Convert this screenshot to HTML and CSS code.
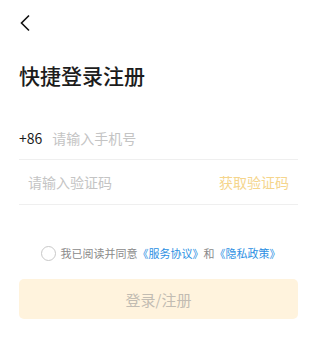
FILE: index.html
```html
<!DOCTYPE html>
<html lang="zh">
<head>
<meta charset="utf-8">
<link rel="stylesheet" href="styles.css">
</head>
<body>
<div class="page">
  <div class="nav">
    <svg class="back" width="12" height="18" viewBox="0 0 12 18"><path d="M10 1.5 L2.5 9 L10 16.5" fill="none" stroke="#111" stroke-width="1.6"/></svg>
  </div>
  <h1 class="title">快捷登录注册</h1>
  <div class="row phone">
    <span class="code">+86</span>
    <span class="ph">请输入手机号</span>
  </div>
  <div class="row verify">
    <span class="ph">请输入验证码</span>
    <span class="get">获取验证码</span>
  </div>
  <div class="agree">
    <span class="radio"></span>
    <span class="txt">我已阅读并同意</span>
    <span class="link">《服务协议》</span>
    <span class="txt">和</span>
    <span class="link">《隐私政策》</span>
  </div>
  <div class="btn">登录/注册</div>
</div>
</body>
</html>
```

FILE: styles.css
```css
html, body {
  margin: 0;
  padding: 0;
  background: #fff;
}
body {
  font-family: "Noto Sans CJK SC", "Noto Sans", sans-serif;
  width: 320px;
  height: 337px;
  overflow: hidden;
}
.page {
  padding: 0 22px 0 19px;
}
.nav {
  height: 46px;
  display: flex;
  align-items: flex-start;
  padding-top: 14px;
  box-sizing: border-box;
}
.back {
  display: block;
}
.title {
  margin: 0;
  font-size: 21px;
  font-weight: 500;
  color: #1c1c1c;
  line-height: 30px;
  margin-top: 14px;
  height: 54px;
}
.row {
  display: flex;
  align-items: center;
  border-bottom: 1px solid #efefef;
  height: 45px;
  box-sizing: border-box;
  font-size: 14px;
}
.phone {
  height: 46px;
  padding-top: 2px;
}
.code {
  color: #1c1c1c;
  margin-right: 10px;
}
.ph {
  color: #c4c4c4;
}
.verify {
  padding-left: 9px;
  padding-right: 9px;
  justify-content: space-between;
}
.get {
  color: #f5d58c;
}
.agree {
  display: flex;
  align-items: center;
  justify-content: center;
  margin-top: 38px;
  height: 20px;
  font-size: 11px;
  padding-left: 4px;
}
.radio {
  width: 13px;
  height: 13px;
  border: 1px solid #c8c8c8;
  border-radius: 50%;
  margin-right: 5px;
}
.txt {
  color: #8a8a8a;
}
.link {
  color: #2b8fe3;
}
.btn {
  margin-top: 16px;
  height: 40px;
  border-radius: 5px;
  background: #fff3dd;
  color: #c2bcb2;
  font-size: 15px;
  display: flex;
  align-items: center;
  justify-content: center;
}
```
